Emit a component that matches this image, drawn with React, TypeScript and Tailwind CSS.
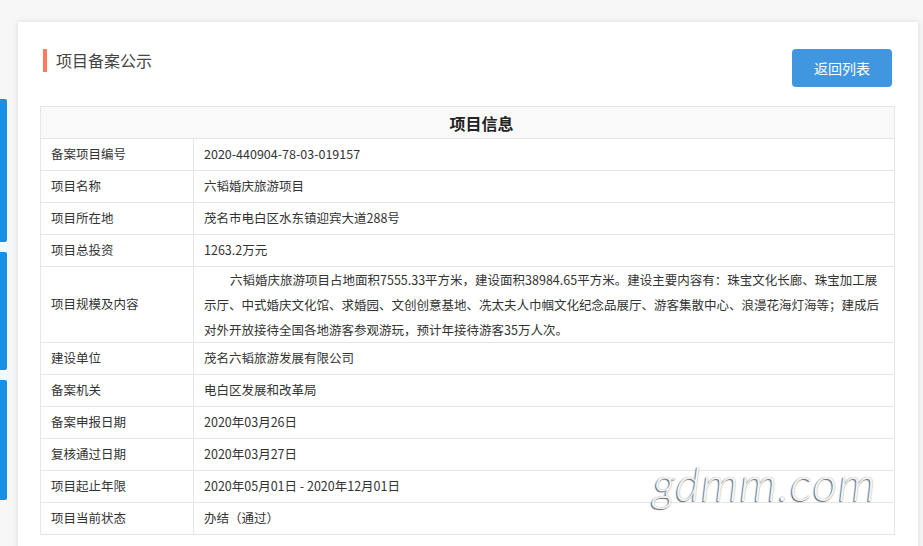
import React from 'react'

const font = { fontFamily: '"Noto Sans CJK SC", "Liberation Sans", sans-serif' }

const rows: { label: string; value: string }[] = [
  { label: '备案项目编号', value: '2020-440904-78-03-019157' },
  { label: '项目名称', value: '六韬婚庆旅游项目' },
  { label: '项目所在地', value: '茂名市电白区水东镇迎宾大道288号' },
  { label: '项目总投资', value: '1263.2万元' },
]

const rows2: { label: string; value: string }[] = [
  { label: '建设单位', value: '茂名六韬旅游发展有限公司' },
  { label: '备案机关', value: '电白区发展和改革局' },
  { label: '备案申报日期', value: '2020年03月26日' },
  { label: '复核通过日期', value: '2020年03月27日' },
  { label: '项目起止年限', value: '2020年05月01日 - 2020年12月01日' },
  { label: '项目当前状态', value: '办结（通过）' },
]

const scaleLines = [
  '六韬婚庆旅游项目占地面积7555.33平方米，建设面积38984.65平方米。建设主要内容有：珠宝文化长廊、珠宝加工展',
  '示厅、中式婚庆文化馆、求婚园、文创创意基地、冼太夫人巾帼文化纪念品展厅、游客集散中心、浪漫花海灯海等；建成后',
  '对外开放接待全国各地游客参观游玩，预计年接待游客35万人次。',
]

function Row({ label, value }: { label: string; value: string }) {
  return (
    <div className="flex border-b border-[#e6e6e6] h-[32px]">
      <div className="w-[153px] shrink-0 border-r border-[#e6e6e6] px-[10px] flex items-center">{label}</div>
      <div className="flex-1 px-[10px] flex items-center">{value}</div>
    </div>
  )
}

export default function App() {
  return (
    <div className="relative h-[546px] overflow-hidden bg-[#f7f7f7] text-[12.5px] text-[#333]" style={font}>
      {/* 左侧蓝色标签 */}
      <div className="absolute left-0 top-[99px] w-[7px] h-[143px] bg-[#1890e6] rounded-r-[2px]" />
      <div className="absolute left-0 top-[252px] w-[7px] h-[118px] bg-[#1890e6] rounded-r-[2px]" />
      <div className="absolute left-0 top-[380px] w-[7px] h-[120px] bg-[#1890e6] rounded-r-[2px]" />

      <div className="pt-[22px] pl-[18px] pr-[5px]">
        <div className="bg-white h-[600px] shadow-[0_0_6px_rgba(0,0,0,0.12)] pl-[22px] pr-[23px]">
          {/* 标题 */}
          <div className="flex justify-between pt-[27px] h-[84px]">
            <div className="flex items-start">
              <div className="w-[4px] h-[23px] bg-[#ff7b5c] ml-[3px]" />
              <div className="ml-[9px] text-[16px] leading-[23px] text-[#444]">项目备案公示</div>
            </div>
            <button className="w-[100px] h-[38px] bg-[#4197df] rounded-[4px] text-white text-[14px] mr-[3px]">
              返回列表
            </button>
          </div>

          {/* 项目信息表 */}
          <div className="border-l border-r border-t border-[#e6e6e6]">
            <div className="h-[32px] border-b border-[#e6e6e6] bg-[#f9f9f9] flex items-center justify-center pl-[28px] text-[16px] font-bold text-[#222]">
              项目信息
            </div>
            {rows.map((r) => (
              <Row key={r.label} {...r} />
            ))}
            <div className="flex border-b border-[#e6e6e6]">
              <div className="w-[153px] shrink-0 border-r border-[#e6e6e6] px-[10px] flex items-center">项目规模及内容</div>
              <div className="flex-1 px-[10px] leading-[25px]">
                {scaleLines.map((l, i) => (
                  <div key={i} className={i === 0 ? 'whitespace-nowrap pl-[26px]' : 'whitespace-nowrap'}>
                    {l}
                  </div>
                ))}
              </div>
            </div>
            {rows2.map((r) => (
              <Row key={r.label} {...r} />
            ))}
          </div>
        </div>
      </div>

      {/* 水印 */}
      <div
        className="absolute left-[653px] top-[447px] text-[48px] italic font-light text-[#f4f4f4] tracking-[1px]"
        style={{ fontFamily: 'Lato, sans-serif', textShadow: '-1px 1px 1px #666, 0 0 1px #999' }}
      >
        gdmm.com
      </div>
    </div>
  )
}
